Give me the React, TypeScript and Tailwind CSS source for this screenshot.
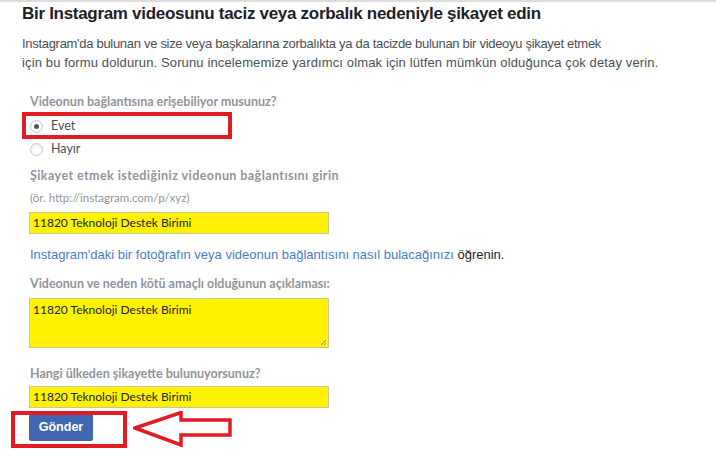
import React from "react";

const labelCls =
  "text-[12.5px] font-bold text-[#90949c] leading-[16px] [font-family:Lato,'Open_Sans',sans-serif]";
const inputCls =
  "w-[300px] h-[22px] bg-[#fff200] border border-[#c9c49a] text-[12px] text-[#1d2129] px-[3px] flex items-center [font-family:Lato,'Open_Sans',sans-serif]";

export default function App() {
  return (
    <div className="w-[716px] h-[469px] bg-white border-t-2 border-[#dcdcdc] overflow-hidden relative [font-family:'Liberation_Sans',Arial,sans-serif]">
      <div className="pl-[22px] pt-[1px]">
        <h1 className="text-[17px] font-bold text-[#1d2129] leading-[22px] tracking-[-0.3px]">
          Bir Instagram videosunu taciz veya zorbalık nedeniyle şikayet edin
        </h1>
        <p className="mt-[9px] w-[680px] text-[13px] leading-[19px] text-[#4b4f56]">
          <span className="tracking-[-0.3px]">
            Instagram'da bulunan ve size veya başkalarına zorbalıkta ya da tacizde bulunan bir videoyu şikayet etmek
          </span>
          <br />
          <span className="tracking-[0.13px]">
            için bu formu doldurun. Sorunu incelememize yardımcı olmak için lütfen mümkün olduğunca çok detay verin.
          </span>
        </p>
      </div>

      <div className="pl-[30px] pt-[22px] flex flex-col">
        <div className={labelCls}>Videonun bağlantısına erişebiliyor musunuz?</div>
        <div className="relative mt-[9px] flex flex-col gap-[9px] text-[12.5px] text-[#4b4f56] [font-family:Lato,'Open_Sans',sans-serif]">
          <div className="flex items-center gap-[8px] h-[14px]">
            <span className="w-[13px] h-[13px] rounded-full border border-[#c4c7cc] bg-white flex items-center justify-center shadow-[inset_0_1px_2px_rgba(0,0,0,0.1)]">
              <span className="w-[5px] h-[5px] rounded-full bg-[#555]" />
            </span>
            <span>Evet</span>
          </div>
          <div className="flex items-center gap-[8px] h-[14px]">
            <span className="w-[13px] h-[13px] rounded-full border border-[#c4c7cc] bg-white shadow-[inset_0_1px_2px_rgba(0,0,0,0.1)]" />
            <span>Hayır</span>
          </div>
          <div className="absolute left-[-8px] top-[-7px] w-[210px] h-[27px] border-[4px] border-[#e31b23]" />
        </div>

        <div className={labelCls + " mt-[12px] tracking-[0.43px]"}>
          Şikayet etmek istediğiniz videonun bağlantısını girin
        </div>
        <div className="mt-[6px] text-[11.5px] text-[#90949c] leading-[16px] [font-family:Lato,'Open_Sans',sans-serif]">
          (ör. http://instagram.com/p/xyz)
        </div>
        <div className={inputCls + " mt-[6px] -ml-[1px]"}>11820 Teknoloji Destek Birimi</div>

        <div className="mt-[12px] text-[13px] leading-[18px] text-[#1d2129]">
          <span className="text-[#4a7cc7]">
            Instagram'daki bir fotoğrafın veya videonun bağlantısını nasıl bulacağınızı
          </span>{" "}
          öğrenin.
        </div>

        <div className={labelCls + " mt-[12px]"}>Videonun ve neden kötü amaçlı olduğunun açıklaması:</div>
        <div className="relative mt-[6px] -ml-[1px] w-[300px] h-[50px] bg-[#fff200] border border-[#c9c49a] text-[12px] text-[#1d2129] px-[3px] pt-[2px] [font-family:Lato,'Open_Sans',sans-serif]">
          11820 Teknoloji Destek Birimi
          <svg className="absolute right-[1px] bottom-[1px]" width="7" height="7" viewBox="0 0 7 7">
            <path d="M6 1L1 6M6 4L4 6" stroke="#888" strokeWidth="1" />
          </svg>
        </div>

        <div className={labelCls + " mt-[18px]"}>Hangi ülkeden şikayette bulunuyorsunuz?</div>
        <div className={inputCls + " mt-[4px] -ml-[1px]"}>11820 Teknoloji Destek Birimi</div>

        <div className="relative mt-[6px] -ml-[1px]">
          <button className="w-[64px] h-[27px] bg-[#4267b2] rounded-[2px] text-white text-[12.5px] font-bold [font-family:'Liberation_Sans',Arial,sans-serif]">
            Gönder
          </button>
          <div className="absolute left-[-18px] top-[-3px] w-[116px] h-[37px] border-[4px] border-[#e31b23]" />
          <svg className="absolute left-[104px] top-[-3px]" width="100" height="38" viewBox="0 0 100 38">
            <path
              d="M2 17 L48 1.5 L48 9 L97 9 L97 24 L48 24 L48 34 Z"
              fill="none"
              stroke="#e31b23"
              strokeWidth="3.5"
              strokeLinejoin="miter"
            />
          </svg>
        </div>
      </div>
    </div>
  );
}
